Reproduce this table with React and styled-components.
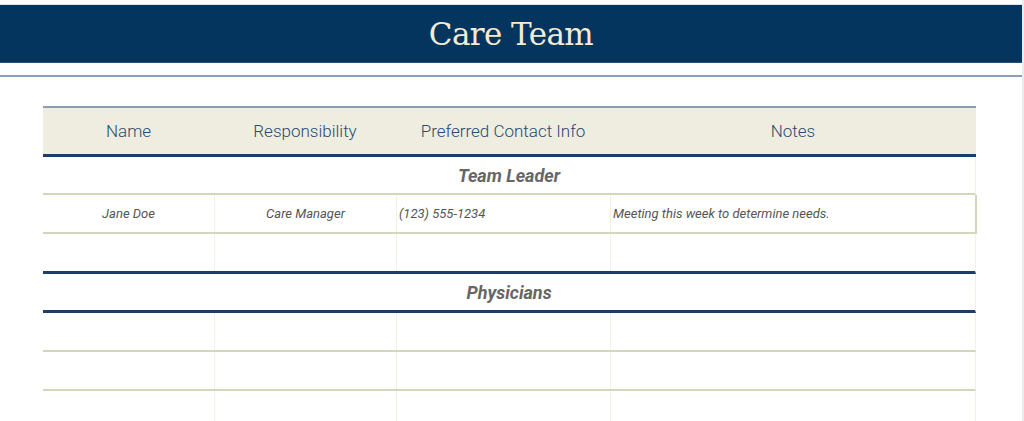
import React from "react";
import styled, { createGlobalStyle } from "styled-components";

const GlobalStyle = createGlobalStyle`
  html, body {
    margin: 0;
    padding: 0;
    background: #fff;
  }
  body {
    font-family: Roboto, "Liberation Sans", sans-serif;
  }
`;

const columns = ["Name", "Responsibility", "Preferred Contact Info", "Notes"];

const sections = [
  {
    title: "Team Leader",
    below: "olive",
    rows: [
      { cells: ["Jane Doe", "Care Manager", "(123) 555-1234", "Meeting this week to determine needs."], boxed: true },
      { cells: ["", "", "", ""], below: "blue" },
    ],
  },
  {
    title: "Physicians",
    below: "blue",
    rows: [
      { cells: ["", "", "", ""], below: "olive" },
      { cells: ["", "", "", ""], below: "olive" },
      { cells: ["", "", "", ""] },
    ],
  },
];

const lineColor = {
  olive: "#d3d5bd",
  blue: "#1c3d68",
};

const App = () => {
  return (
    <>
      <GlobalStyle />
      <Page>
        <Banner>
          <Title>Care Team</Title>
        </Banner>
        <Rule />
        <Table>
          <HeadRow>
            {columns.map((c) => (
              <HeadCell key={c}>{c}</HeadCell>
            ))}
          </HeadRow>
          {sections.map((s) => (
            <React.Fragment key={s.title}>
              <SectionRow line={s.below}>{s.title}</SectionRow>
              {s.rows.map((r, i) => (
                <Row key={i} line={r.below} boxed={r.boxed}>
                  {r.cells.map((txt, j) => (
                    <Cell key={j} align={j < 2 ? "center" : "left"}>
                      {txt}
                    </Cell>
                  ))}
                </Row>
              ))}
            </React.Fragment>
          ))}
        </Table>
      </Page>
    </>
  );
};

export default App;

const Page = styled.div`
  width: 1022px;
  height: 421px;
  overflow: hidden;
  border-right: 2px solid #ececec;
  padding-top: 4px;
  box-sizing: content-box;
  background: #fff;
`;

const Banner = styled.header`
  height: 57px;
  background: #03355f;
  border-top: 1px solid #dfe3ea;
  border-bottom: 1px solid #26507c;
  display: flex;
  align-items: center;
  justify-content: center;
`;

const Title = styled.h1`
  margin: 0;
  font-family: "DejaVu Serif", "Liberation Serif", serif;
  font-weight: normal;
  font-size: 31px;
  color: #f3ecd3;
  letter-spacing: -0.6px;
`;

const Rule = styled.div`
  height: 2px;
  margin-top: 12px;
  background: #8ba0b7;
`;

const Table = styled.div`
  margin: 29px 0 0 43px;
  width: 933px;
  border-top: 2px solid #8b9db4;
`;

const grid = `
  display: grid;
  grid-template-columns: 171px 182px 214px 366px;
`;

const HeadRow = styled.div`
  ${grid}
  height: 46px;
  background: #eeeddf;
  border-bottom: 3px solid ${lineColor.blue};
`;

const HeadCell = styled.div`
  display: flex;
  align-items: center;
  justify-content: center;
  font-size: 17px;
  font-weight: 300;
  color: #2a4a72;
`;

const SectionRow = styled.div`
  height: 36px;
  display: flex;
  align-items: center;
  justify-content: center;
  font-size: 18px;
  font-weight: bold;
  font-style: italic;
  color: #666;
  border-right: 1px solid #f1f1e4;
  border-bottom: ${(p) => (p.line === "blue" ? "3px" : "2px")} solid
    ${(p) => lineColor[p.line]};
`;

const Row = styled.div`
  ${grid}
  height: 37px;
  border-bottom: ${(p) =>
    p.line ? `${p.line === "blue" ? "3px" : "2px"} solid ${lineColor[p.line]}` : "none"};
  border-right: ${(p) => (p.boxed ? `2px solid ${lineColor.olive}` : "1px solid #f1f1e4")};
  ${(p) => (p.boxed ? `border-bottom: 2px solid ${lineColor.olive}; width: 932px;` : "")}
`;

const Cell = styled.div`
  display: flex;
  align-items: center;
  justify-content: ${(p) => (p.align === "center" ? "center" : "flex-start")};
  padding-left: ${(p) => (p.align === "center" ? "0" : "2px")};
  font-size: 13px;
  font-style: italic;
  color: #555;
  & + & {
    border-left: 1px solid #f1f1e4;
  }
`;
